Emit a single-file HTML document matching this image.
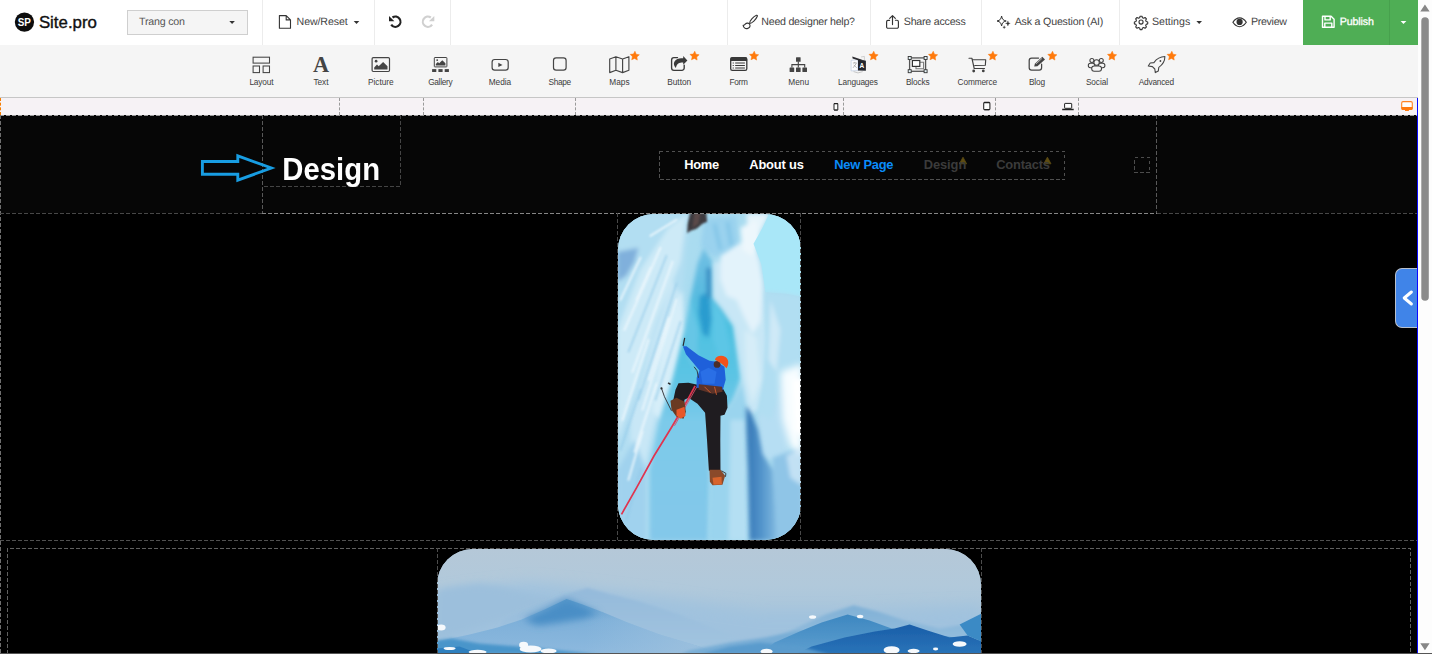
<!DOCTYPE html>
<html>
<head>
<meta charset="utf-8">
<title>Site.pro</title>
<style>
*{box-sizing:border-box;margin:0;padding:0}
html,body{width:1432px;height:654px;overflow:hidden;background:#fff;font-family:"Liberation Sans",sans-serif;}
.abs{position:absolute}
.t{position:absolute;white-space:nowrap}
#top{position:absolute;left:0;top:0;width:1418px;height:45px;background:#fff}
#tools{position:absolute;left:0;top:45px;width:1418px;height:53px;background:#f5f5f5;border-bottom:1px solid #c6c6c6}
#ruler{position:absolute;left:0;top:98px;width:1418px;height:17px;background:#f6f2f5}
#canvas{position:absolute;left:0;top:115px;width:1418px;height:539px;background:#000;overflow:hidden}
#sb{position:absolute;left:1418px;top:0;width:14px;height:654px;background:#fdfdfd}
.sep{position:absolute;top:0;width:1px;height:45px;background:#ececec}
.rd{position:absolute;top:98px;width:0;height:17px;border-left:1px dashed #9a9a9a}
#icons{position:absolute;left:0;top:0}
</style>
</head>
<body>
<!-- TOP BAR -->
<div id="top">
  <div class="abs" style="left:127px;top:10px;width:121px;height:25px;border:1px solid #cfcfcf;background:#f5f5f5"></div>
  <div class="sep" style="left:262px"></div>
  <div class="sep" style="left:374px"></div>
  <div class="sep" style="left:450px"></div>
  <div class="sep" style="left:727px"></div>
  <div class="sep" style="left:870px"></div>
  <div class="sep" style="left:981px"></div>
  <div class="sep" style="left:1119px"></div>
  <div class="abs" style="left:1303px;top:0;width:115px;height:45px;background:#4fae55"></div>
  <div class="abs" style="left:1389px;top:0;width:1px;height:45px;background:#47a14d"></div>
</div>
<!-- TOOLBAR -->
<div id="tools"></div>
<!-- RULER -->
<div id="ruler"></div>
<div class="rd" style="left:0;border-left-color:#f57c00"></div>
<div class="rd" style="left:339px"></div>
<div class="rd" style="left:423px"></div>
<div class="rd" style="left:575px"></div>
<div class="rd" style="left:843px"></div>
<div class="rd" style="left:995px"></div>
<div class="rd" style="left:1078px"></div>

<!-- CANVAS -->
<div id="canvas">
<div class="abs" style="left:0;top:0;width:1418px;height:98px;background:#060606"></div>
<!-- picture 1 -->
<div class="abs" style="left:617.5px;top:99.2px;width:183.2px;height:325.6px;border-radius:36px;overflow:hidden;background:#a9d8ee">
<svg class="abs" style="left:0;top:0" width="183.2" height="325.6" viewBox="617.5 214.2 183.2 325.6" preserveAspectRatio="none">
<defs>
  <filter id="b1" x="-20%" y="-20%" width="140%" height="140%"><feGaussianBlur stdDeviation="0.8"/></filter>
  <filter id="b2" x="-20%" y="-20%" width="140%" height="140%"><feGaussianBlur stdDeviation="2"/></filter>
  <filter id="b3" x="-30%" y="-30%" width="160%" height="160%"><feGaussianBlur stdDeviation="3.5"/></filter>
  <filter id="b4" x="-40%" y="-40%" width="180%" height="180%"><feGaussianBlur stdDeviation="6"/></filter>
  <linearGradient id="gv" x1="0" y1="246" x2="0" y2="540" gradientUnits="userSpaceOnUse">
    <stop offset="0" stop-color="#74c0e4"/><stop offset="0.14" stop-color="#5cbbe0"/><stop offset="0.27" stop-color="#4cc0e0"/><stop offset="0.45" stop-color="#5cc4e4"/><stop offset="0.6" stop-color="#7ccaea"/><stop offset="1" stop-color="#84c8ea"/>
  </linearGradient>
  <linearGradient id="sh" x1="746" y1="0" x2="776" y2="0" gradientUnits="userSpaceOnUse">
    <stop offset="0" stop-color="#3577b6"/><stop offset="0.45" stop-color="#4f91c9"/><stop offset="1" stop-color="#80b9e0"/>
  </linearGradient>
</defs>
<rect x="617" y="214" width="185" height="327" fill="#aadcf0"/>
<!-- left ice wall -->
<g filter="url(#b2)">
  <path d="M617 214 H690 L686 250 L682 300 L676 350 L660 420 L650 460 L649 541 H617 Z" fill="#b2def2"/>
  <path d="M617 330 L640 270 L668 228 L686 214 L680 262 L656 320 L634 390 L617 440 Z" fill="#cdeaf7"/>
  <path d="M630 420 L652 340 L672 280 L682 300 L670 360 L652 430 L642 480 L630 500 Z" fill="#c8e7f6"/>
  <path d="M617 252 L638 248 L634 262 L626 276 L617 282 Z" fill="#80b0dc"/>
  <path d="M617 470 L634 440 L646 470 L646 541 L617 541 Z" fill="#a0d2ee"/>
  <path d="M664 330 L682 290 L684 330 L674 376 L660 420 L652 412 Z" fill="#d6eef9"/>
</g>
<!-- ice texture streaks on left -->
<g fill="none" stroke="#eef8fd" stroke-width="2.2" stroke-linecap="round" filter="url(#b1)" opacity="0.8">
  <path d="M624 330 L660 248"/><path d="M632 372 L672 262"/><path d="M622 420 L648 340"/><path d="M642 410 L676 300"/><path d="M628 480 L642 432"/>
  <path d="M650 236 L676 220"/><path d="M636 300 L650 268"/><path d="M620 300 L640 258"/><path d="M648 380 L668 318"/><path d="M634 452 L656 384"/>
</g>
<g fill="none" stroke="#8fc8e8" stroke-width="1.6" stroke-linecap="round" filter="url(#b1)" opacity="0.7">
  <path d="M628 352 L666 256"/><path d="M638 400 L676 284"/><path d="M620 450 L640 390"/><path d="M655 400 L680 322"/><path d="M626 520 L640 470"/>
</g>
<!-- light blue right of rock -->
<g filter="url(#b2)">
  <path d="M704 218 L736 216 L738 246 L726 258 L712 256 L700 246 Z" fill="#9ad2ee"/>
  <path d="M714 224 L720 250 M727 222 L731 246" stroke="#6cbbe2" stroke-width="2" fill="none"/>
</g>
<!-- central groove -->
<g filter="url(#b2)">
  <path d="M703 248 L712 262 L713 298 L722 310 L733 326 L740 378 L732 402 L722 414 L710 458 L708 541 H649 L649 470 L658 424 L672 380 L684 332 L690 298 L697 264 Z" fill="url(#gv)"/>
  <path d="M699 296 L709 292 L711 320 L708 338 L702 334 L698 314 Z" fill="#2a9ccf"/>
  <path d="M705.5 268 L711 268 L711 298 L706 298 Z" fill="#3a90c4"/>
  <path d="M690 300 L698 330 L696 370 L688 360 L684 332 Z" fill="#66c6e6"/>
  <path d="M712 300 L724 318 L730 350 L722 366 L712 340 Z" fill="#5cc6e6"/>
</g>
<!-- ice right of groove: bright white mass -->
<g filter="url(#b2)">
  <path d="M713 262 L730 262 L748 250 L752 244 L760 262 L764 292 L766 340 L764 380 L758 410 L748 416 L742 380 L734 326 L722 308 L713 298 Z" fill="#c8e7f6"/>
  <path d="M746 214 L769 214 L762 228 L754 244 L748 248 Z" fill="#e6f4fb"/>
  <path d="M720 256 L742 242 L756 250 L762 282 L760 322 L752 334 L744 318 L736 300 L726 296 L720 280 Z" fill="#e3f3fb"/>
  <path d="M740 228 L756 220 L760 240 L752 256 L742 250 Z" fill="#edf7fc"/>
  <path d="M744 330 L756 338 L760 380 L752 404 L746 380 Z" fill="#d6edf8"/>
  <path d="M722 414 L732 402 L742 384 L748 416 L748 470 L750 541 H708 L710 458 Z" fill="#9ad4ee"/>
  <path d="M730 420 L746 420 L748 541 H728 Z" fill="#b4dff3"/>
</g>
<!-- sky -->
<path d="M769 213 H802 V297 L786 294 L765 292.5 L761 265 L753 244 L762 228 Z" fill="#a9e7f8"/>
<!-- right column -->
<g filter="url(#b2)">
  <path d="M765 292 L786 294 L802 297 V376 L784 376 L770 420 L758 412 L764 380 L766 340 Z" fill="#b1def2"/>
  <path d="M770 300 L780 330 L776 372 L768 360 Z" fill="#cfe9f7"/>
  <path d="M758 412 L770 420 L784 376 L790 400 L788 456 L772 460 L758 458 Z" fill="#b6def3"/>
</g>
<!-- shadow column -->
<g filter="url(#b2)">
  <path d="M745.5 406 L751 414 L757.5 430 L762 454 L772 470 L777 541 H749 L747.5 470 L746 430 Z" fill="url(#sh)"/>
  <path d="M772 458 L788 452 L802 446 V541 H776 Z" fill="#8fc5e7"/>
  <path d="M786 456 L802 448 V486 L790 478 Z" fill="#c2e1f4"/>
</g>
<!-- sun glare far right -->
<path d="M780 372 L802 364 V454 L790 448 L782 420 Z" fill="#f7fdff" filter="url(#b3)"/>
<path d="M792 380 L802 378 V440 L794 430 Z" fill="#ffffff" filter="url(#b2)"/>
<!-- dark rock at top -->
<path d="M689.6 213 L705.8 213 L706.6 222 L702 224 L696 229 L690 231 L686.6 233.5 L687.2 224 Z" fill="#3e3a3f" filter="url(#b1)"/>
<path d="M694 213 L700 213 L698 224 L692 228 Z" fill="#5a4a48" filter="url(#b1)"/>
<!-- climber -->
<g>
  <!-- pants -->
  <path d="M697 385 L722 388 L726.4 396 L727 408 L724 415 L720 416 L719.8 440 L720 471 L708.4 471 L706.5 440 L704.6 413 L697 404 L688 398 L684 400 L683 408 L672 404 L675 390 L678 383.4 L688 383 Z" fill="#1f1c20"/>
  <path d="M694.6 386 L686 402 L672 426 L653.6 456 L636 488 L621 514.5" fill="none" stroke="#e0344f" stroke-width="1.7"/>
  <path d="M696.4 387 L682 412 L674 426" fill="none" stroke="#d8506a" stroke-width="0.9"/>
  <!-- left boot -->
  <path d="M670 401 L676 398 L684 402 L685.4 412 L683 419 L676 417 L671 410 Z" fill="#6a3a22"/>
  <path d="M676 410 L684 407 L685 416 L680 419 L676 416 Z" fill="#e8582a"/>
  <!-- right boot -->
  <path d="M709 470 L720 470 L724.6 476 L722 485 L712 485.5 L709.4 482 Z" fill="#8a4a2a"/>
  <path d="M712 478 L721 477 L721.4 484.6 L713 485 Z" fill="#d8642c"/>
  <path d="M721 471 L725.4 473.6 L725 477" fill="none" stroke="#333" stroke-width="0.9"/>
  <!-- jacket -->
  <path d="M682.4 346.4 L686 346.4 L698 355.4 L709 361 L716 362 L724 367 L725.2 380 L722.4 390 L696 388 L696.2 378 L699 370.6 L693 363.4 L685.4 354.4 Z" fill="#1f60da"/>
  <path d="M700 372 L708 368 L716 372 L714 384 L702 384 Z" fill="#2a6fe6"/>
  <!-- harness -->
  <path d="M698.4 384.4 L721.6 387 L722 392 L712 394 L698 389.6 Z" fill="#5e3328"/>
  <path d="M704 387 L710 393 M714 387 L716 395" stroke="#c85a30" stroke-width="1" fill="none"/>
  <!-- head + helmet -->
  <circle cx="716.6" cy="364.6" r="3.4" fill="#4a2e2a"/>
  <path d="M714.4 360 C715.4 356 721 354.6 725 357.2 C728.4 359.6 728.6 364.6 726 368.4 C723.4 365.4 719.6 362.4 714.4 360 Z" fill="#f2521c"/>
  <!-- ice tools -->
  <path d="M682.6 346 L684.2 338" fill="none" stroke="#2a2a30" stroke-width="1.2"/>
  <path d="M693.6 367 L696.6 371 L698 378" fill="none" stroke="#333a44" stroke-width="1"/>
  <path d="M660.8 388 L664 397 L671 411" fill="none" stroke="#3a3a40" stroke-width="1"/>
  <path d="M667.6 383 L670 384.6" fill="none" stroke="#2a2a2a" stroke-width="1.6"/>
  <circle cx="661" cy="388.6" r="1.1" fill="#2a2a2a"/>
</g>
</svg>

</div>
<!-- picture 2 -->
<div class="abs" style="left:437.4px;top:433.5px;width:544px;height:140px;border-radius:36px 36px 0 0;overflow:hidden;background:#a8c4da">
<svg class="abs" style="left:0;top:0" width="544" height="140" viewBox="437.4 548.5 544 140" preserveAspectRatio="none">
<defs>
  <filter id="m1" x="-10%" y="-30%" width="120%" height="160%"><feGaussianBlur stdDeviation="0.7"/></filter>
  <filter id="m2" x="-10%" y="-30%" width="120%" height="160%"><feGaussianBlur stdDeviation="1.6"/></filter>
  <filter id="m3" x="-10%" y="-40%" width="120%" height="180%"><feGaussianBlur stdDeviation="3.5"/></filter>
  <filter id="m4" x="-10%" y="-40%" width="120%" height="180%"><feGaussianBlur stdDeviation="7"/></filter>
  <linearGradient id="sky2" x1="0" y1="548" x2="0" y2="654" gradientUnits="userSpaceOnUse">
    <stop offset="0" stop-color="#b5c8d8"/><stop offset="0.35" stop-color="#b1c9db"/><stop offset="0.7" stop-color="#a5c4dc"/><stop offset="1" stop-color="#9bbfdc"/>
  </linearGradient>
  <linearGradient id="gA" x1="0" y1="584" x2="0" y2="654" gradientUnits="userSpaceOnUse"><stop offset="0" stop-color="#93b9da"/><stop offset="1" stop-color="#a3c5e0"/></linearGradient>
  <linearGradient id="gB" x1="0" y1="598" x2="0" y2="654" gradientUnits="userSpaceOnUse"><stop offset="0" stop-color="#5a9acb"/><stop offset="0.4" stop-color="#7eb0d9"/><stop offset="1" stop-color="#8db9de"/></linearGradient>
  <linearGradient id="gR1" x1="0" y1="604" x2="0" y2="654" gradientUnits="userSpaceOnUse"><stop offset="0" stop-color="#7fb0d6"/><stop offset="1" stop-color="#9cc2df"/></linearGradient>
  <linearGradient id="gR2" x1="0" y1="614" x2="0" y2="654" gradientUnits="userSpaceOnUse"><stop offset="0" stop-color="#3d87c0"/><stop offset="1" stop-color="#5e9fd0"/></linearGradient>
  <linearGradient id="gR3" x1="0" y1="624" x2="0" y2="654" gradientUnits="userSpaceOnUse"><stop offset="0" stop-color="#1a5ea8"/><stop offset="1" stop-color="#2a74b9"/></linearGradient>
</defs>
<rect x="437" y="548" width="545" height="141" fill="url(#sky2)"/>
<!-- far haze bands -->
<g filter="url(#m4)">
  <path d="M437 594 L480 588 L530 582 L570 586 L620 592 L680 600 L760 612 L840 612 L982 606 V690 H437 Z" fill="#a0c2de"/>
</g>
<!-- far left faint ridge -->
<path d="M437 590 L455 586 L480 583 L500 586 L530 594 L560 600 L437 640 Z" fill="#9cbfdc" filter="url(#m3)"/>
<!-- left hazy back peak -->
<path d="M505 618 L540 604 L565 594 L588 587.6 L612 594 L640 601 L680 614 L720 630 L760 646 L780 654 H480 Z" fill="url(#gA)" filter="url(#m2)"/>
<!-- left main ridge -->
<path d="M437 641 L470 634 L498 627 L522 619 L545 609 L567 598.5 L583 604 L604 612 L628 622 L660 634 L700 646 L720 654 H437 Z" fill="url(#gB)" filter="url(#m1)"/>
<path d="M524 619 L548 608 L567 598.5 L580 604 L600 613 L584 618 L560 622 L538 625 Z" fill="#4a8ec6" filter="url(#m3)"/>
<linearGradient id="hz" x1="585" y1="0" x2="700" y2="0" gradientUnits="userSpaceOnUse"><stop offset="0" stop-color="#a0c2de" stop-opacity="0"/><stop offset="1" stop-color="#a0c2de" stop-opacity="0.75"/></linearGradient>
<clipPath id="cB"><path d="M437 641 L470 634 L498 627 L522 619 L545 609 L567 598.5 L583 604 L604 612 L628 622 L660 634 L700 646 L720 654 H437 Z"/></clipPath>
<path d="M585 596 H790 V654 H585 Z" fill="url(#hz)" clip-path="url(#cB)"/>
<!-- bottom-left foreground -->
<path d="M437 640 L452 638 L480 643 L520 646 L560 650 L600 654 H437 Z" fill="#4a95ca" filter="url(#m2)"/>
<path d="M437 648 L460 646 L476 652 L480 654 H437 Z" fill="#2f7fbe" filter="url(#m1)"/>
<!-- right ridges -->
<path d="M770 640 L800 626 L826 614 L854 604.8 L878 611 L905 620 L940 628 L965 624 L982 618 V654 H740 Z" fill="url(#gR1)" filter="url(#m2)"/>
<path d="M690 650 L730 642 L765 637 L800 630 L830 638 L850 654 H680 Z" fill="#78add6" filter="url(#m2)"/>
<path d="M775 642 L800 631 L822 622 L848 614 L870 620 L892 628 L930 634 L982 640 V654 H760 Z" fill="url(#gR2)" filter="url(#m1)"/>
<path d="M812 646 L845 637 L875 631 L895 628 L910 624 L928 630 L950 637 L968 635 L982 641 V654 H795 Z" fill="url(#gR3)" filter="url(#m1)"/>
<path d="M960 624 L982 613 V641 L968 635 Z" fill="#3a8ac5" filter="url(#m1)"/>
<path d="M700 654 L730 646 L760 642 L800 646 L830 654 Z" fill="#5a9bcd" filter="url(#m2)"/>
<!-- clouds -->
<g fill="#f6f9fc" filter="url(#m1)">
  <ellipse cx="441.5" cy="627" rx="4.5" ry="3"/>
  <ellipse cx="531" cy="648.5" rx="11" ry="3.6"/><ellipse cx="524" cy="644.5" rx="4.5" ry="3.2"/><ellipse cx="549" cy="650.5" rx="8" ry="2.6"/>
  <ellipse cx="478" cy="651.5" rx="9" ry="2.2"/><ellipse cx="450" cy="648" rx="6" ry="1.6"/>
  <ellipse cx="767" cy="651" rx="6" ry="2.8"/>
  <ellipse cx="813" cy="616.5" rx="3.6" ry="1.8"/><ellipse cx="860.5" cy="616" rx="3.2" ry="1.8"/>
  <ellipse cx="892" cy="649.5" rx="8" ry="3.8"/><ellipse cx="914" cy="650.5" rx="6" ry="2.2"/>
  <ellipse cx="960" cy="643.5" rx="7" ry="2.8"/><ellipse cx="936" cy="648.5" rx="2.6" ry="1.4"/>
</g>
</svg>

</div>
<svg class="abs" style="left:0;top:0" width="1418" height="539" viewBox="0 115 1418 539">
  <g fill="none" stroke="#6a6a6a" stroke-width="1" stroke-dasharray="3.7 2.3" shape-rendering="crispEdges">
    <!-- canvas top / left -->
    <path d="M0 115.5 H1418" stroke="#9a9a9a"/>
    <path d="M0.5 115 V654" stroke="#6e6e6e"/>
    <!-- section separators -->
    <path d="M0 213.5 H262 M1157 213.5 H1418" stroke="#474747"/>
    <path d="M262 213.5 H1157" stroke="#858585"/>
    <path d="M0 540.5 H1418" stroke="#505050"/>
    <!-- header columns -->
    <path d="M262.5 115 V213" stroke="#585858"/>
    <path d="M1156.5 115 V213" stroke="#585858"/>
    <!-- design title box -->
    <path d="M400.5 115 V186.5 H262.5" stroke="#444"/>
    <!-- nav box -->
    <rect x="659.5" y="151.5" width="405" height="28" stroke="#505050"/>
    <!-- little square -->
    <rect x="1134.5" y="157.5" width="15" height="15" stroke="#4c4c4c"/>
    <!-- picture 1 wrapper -->
    <path d="M617.5 213 V540" stroke="#484848"/>
    <path d="M800.5 213 V540" stroke="#484848"/>
    <!-- section 3 container -->
    <path d="M7.5 654 V548.5 H1410.5 V654" stroke="#606060"/>
    <path d="M437.5 548 V654" stroke="#4c4c4c"/>
    <path d="M981.5 548 V654" stroke="#4c4c4c"/>
  </g>
  <!-- arrow -->
  <path d="M202.4 161.5 H237.8 V155.9 L271.4 168 L237.8 180.2 V174.3 H202.4 Z" fill="none" stroke="#189de2" stroke-width="2.9" stroke-linejoin="miter" stroke-miterlimit="10"/>
  <!-- warning triangles -->
  <path d="M963 157.2 L966.6 163.8 H959.4 Z" fill="#5e4c12" stroke="#5e4c12" stroke-width="0.8" stroke-linejoin="round"/>
  <path d="M1047.4 157.2 L1051 163.8 H1043.8 Z" fill="#5e4c12" stroke="#5e4c12" stroke-width="0.8" stroke-linejoin="round"/>
</svg>
<!-- side handle -->
<div class="abs" style="left:1395px;top:152.5px;width:22px;height:60px;background:#4084e8;border:1px solid #b9c0cc;border-right:none;border-radius:7px 0 0 7px"></div>
<svg class="abs" style="left:1395px;top:152.5px" width="22" height="60" viewBox="1395 267.5 22 60"><path d="M1411.4 291.5 L1404.2 297.5 L1411.4 303.5" fill="none" stroke="#fff" stroke-width="3" stroke-linecap="round" stroke-linejoin="round"/></svg>

</div>

<!-- TEXTS -->
<div class="t" style="left:139.00px;top:11.91px;font-size:10.65px;line-height:21px;letter-spacing:-0.201px;color:#555;text-rendering:geometricPrecision;">Trang con</div>
<div class="t" style="left:296.60px;top:11.91px;font-size:10.65px;line-height:21px;letter-spacing:-0.122px;color:#444;text-rendering:geometricPrecision;">New/Reset</div>
<div class="t" style="left:761.30px;top:11.91px;font-size:10.65px;line-height:21px;letter-spacing:-0.250px;color:#444;text-rendering:geometricPrecision;">Need designer help?</div>
<div class="t" style="left:903.80px;top:11.91px;font-size:10.65px;line-height:21px;letter-spacing:-0.231px;color:#444;text-rendering:geometricPrecision;">Share access</div>
<div class="t" style="left:1014.70px;top:11.91px;font-size:10.65px;line-height:21px;letter-spacing:-0.196px;color:#444;text-rendering:geometricPrecision;">Ask a Question (AI)</div>
<div class="t" style="left:1152.00px;top:11.91px;font-size:10.65px;line-height:21px;letter-spacing:-0.035px;color:#444;text-rendering:geometricPrecision;">Settings</div>
<div class="t" style="left:1251.00px;top:11.91px;font-size:10.65px;line-height:21px;letter-spacing:-0.319px;color:#444;text-rendering:geometricPrecision;">Preview</div>
<div class="t" style="left:1339.70px;top:11.91px;font-size:10.65px;line-height:21px;letter-spacing:-0.122px;color:#fff;text-rendering:geometricPrecision;-webkit-text-stroke:0.3px #fff;">Publish</div>
<div class="t" style="left:249.40px;top:73.82px;font-size:8.30px;line-height:17px;letter-spacing:-0.140px;color:#3c3c3c;">Layout</div>
<div class="t" style="left:313.50px;top:73.82px;font-size:8.30px;line-height:17px;letter-spacing:-0.091px;color:#3c3c3c;">Text</div>
<div class="t" style="left:368.00px;top:73.82px;font-size:8.30px;line-height:17px;letter-spacing:-0.019px;color:#3c3c3c;">Picture</div>
<div class="t" style="left:428.20px;top:73.82px;font-size:8.30px;line-height:17px;letter-spacing:-0.318px;color:#3c3c3c;">Gallery</div>
<div class="t" style="left:488.70px;top:73.82px;font-size:8.30px;line-height:17px;letter-spacing:-0.015px;color:#3c3c3c;">Media</div>
<div class="t" style="left:548.50px;top:73.82px;font-size:8.30px;line-height:17px;letter-spacing:-0.372px;color:#3c3c3c;">Shape</div>
<div class="t" style="left:609.30px;top:73.82px;font-size:8.30px;line-height:17px;letter-spacing:0.022px;color:#3c3c3c;">Maps</div>
<div class="t" style="left:667.30px;top:73.82px;font-size:8.30px;line-height:17px;letter-spacing:-0.037px;color:#3c3c3c;">Button</div>
<div class="t" style="left:729.40px;top:73.82px;font-size:8.30px;line-height:17px;letter-spacing:-0.280px;color:#3c3c3c;">Form</div>
<div class="t" style="left:788.30px;top:73.82px;font-size:8.30px;line-height:17px;letter-spacing:-0.017px;color:#3c3c3c;">Menu</div>
<div class="t" style="left:838.00px;top:73.82px;font-size:8.30px;line-height:17px;letter-spacing:-0.136px;color:#3c3c3c;">Languages</div>
<div class="t" style="left:905.90px;top:73.82px;font-size:8.30px;line-height:17px;letter-spacing:-0.137px;color:#3c3c3c;">Blocks</div>
<div class="t" style="left:957.60px;top:73.82px;font-size:8.30px;line-height:17px;letter-spacing:-0.155px;color:#3c3c3c;">Commerce</div>
<div class="t" style="left:1029.00px;top:73.82px;font-size:8.30px;line-height:17px;letter-spacing:-0.200px;color:#3c3c3c;">Blog</div>
<div class="t" style="left:1085.90px;top:73.82px;font-size:8.30px;line-height:17px;letter-spacing:-0.095px;color:#3c3c3c;">Social</div>
<div class="t" style="left:1138.80px;top:73.82px;font-size:8.30px;line-height:17px;letter-spacing:-0.234px;color:#3c3c3c;">Advanced</div>
<div class="t" style="left:282.30px;top:139.95px;font-size:29.30px;line-height:59px;letter-spacing:0.026px;color:#fff;font-weight:bold;transform:scaleY(1.08);transform-origin:0 39.65px;">Design</div>
<div class="t" style="left:684.25px;top:151.78px;font-size:12.90px;line-height:26px;letter-spacing:-0.287px;color:#fff;font-weight:bold;">Home</div>
<div class="t" style="left:749.25px;top:151.78px;font-size:12.90px;line-height:26px;letter-spacing:-0.158px;color:#fff;font-weight:bold;">About us</div>
<div class="t" style="left:834.25px;top:151.78px;font-size:12.90px;line-height:26px;letter-spacing:-0.234px;color:#0a8cfa;font-weight:bold;">New Page</div>
<div class="t" style="left:923.75px;top:151.78px;font-size:12.90px;line-height:26px;letter-spacing:-0.091px;color:#3b3b3b;font-weight:bold;">Design</div>
<div class="t" style="left:996.25px;top:151.78px;font-size:12.90px;line-height:26px;letter-spacing:-0.209px;color:#3b3b3b;font-weight:bold;">Contacts</div>

<!-- ICONS -->
<svg id="icons" width="1418" height="115" viewBox="0 0 1418 115">
<defs>
  <path id="star" d="M0.00,-4.80 L1.38,-1.90 L4.57,-1.48 L2.23,0.73 L2.82,3.88 L0.00,2.35 L-2.82,3.88 L-2.23,0.73 L-4.57,-1.48 L-1.38,-1.90 Z" fill="#ff7a0c" stroke="#ff7a0c" stroke-width="0.5" stroke-linejoin="round"/>
</defs>
<!-- ===== LOGO ===== -->
<circle cx="24.45" cy="22.1" r="9.65" fill="#0d0d0d"/>
<text x="24.35" y="26.0" font-family="Liberation Sans" font-weight="bold" font-size="10.8" fill="#fff" text-anchor="middle" textLength="13.2" lengthAdjust="spacingAndGlyphs">SP</text>
<text x="38.9" y="27.85" font-family="Liberation Sans" font-size="15.8" fill="#111" stroke="#111" stroke-width="0.36" textLength="58" lengthAdjust="spacingAndGlyphs">Site.pro</text>

<!-- select caret -->
<path d="M229.3 21 h5.6 l-2.8 2.9 z" fill="#333"/>
<!-- file icon -->
<path d="M279.4 15.6 h6.8 l4.3 4.3 v8.4 h-11.1 z M286.2 15.6 v4.3 h4.3" fill="none" stroke="#333" stroke-width="1.1" stroke-linejoin="round"/>
<!-- new/reset caret -->
<path d="M353.7 21 h5.6 l-2.8 2.9 z" fill="#333"/>
<!-- undo -->
<path d="M392.5 17.5 A5.1 5.1 0 1 1 391.2 24.6" fill="none" stroke="#222" stroke-width="2.2"/>
<path d="M389 15.9 v5.3 h5.4 z" fill="#222"/>
<!-- redo -->
<path d="M430.8 17.5 A5.1 5.1 0 1 0 432.1 24.6" fill="none" stroke="#d0d0d0" stroke-width="2.2"/>
<path d="M434.3 15.9 v5.3 h-5.4 z" fill="#d0d0d0"/>
<!-- brush -->
<g fill="none" stroke="#333" stroke-width="1.1" stroke-linecap="round" stroke-linejoin="round">
  <path d="M749.6 23.4 C749.4 21.2 753.4 16.4 756.4 15.3 C757.2 15.1 757.5 15.6 757.3 16.3 C756.2 19.4 751.8 23.6 749.6 23.4 Z"/>
  <path d="M743.1 25.2 C744.2 25.6 744.6 24.9 745.2 24.2 C746.6 22.6 749 22.8 749.8 24.6 C750.6 26.4 749.4 28.2 747.2 28.6 C745.2 28.9 743.4 27.6 743.1 25.2 Z"/>
</g>
<!-- share -->
<g fill="none" stroke="#333" stroke-width="1.15" stroke-linecap="round" stroke-linejoin="round">
  <path d="M889.6 20.3 h-1.6 a1.4 1.4 0 0 0 -1.4 1.4 v5.2 a1.4 1.4 0 0 0 1.4 1.4 h9 a1.4 1.4 0 0 0 1.4 -1.4 v-5.2 a1.4 1.4 0 0 0 -1.4 -1.4 h-1.6"/>
  <path d="M892.5 24.6 V15.8 M889.7 18.4 L892.5 15.6 L895.3 18.4"/>
</g>
<!-- sparkle -->
<g stroke="#333" stroke-linejoin="round">
  <path d="M1001.6 16 C1002.2 19.2 1003 20.3 1006.2 21 C1003 21.7 1002.2 22.8 1001.6 26 C1001 22.8 1000.2 21.7 997 21 C1000.2 20.3 1001 19.2 1001.6 16 Z" fill="none" stroke-width="1"/>
  <path d="M1007.9 20.9 C1008.2 22.7 1008.5 23.1 1010.2 23.4 C1008.5 23.7 1008.2 24.1 1007.9 25.9 C1007.6 24.1 1007.3 23.7 1005.6 23.4 C1007.3 23.1 1007.6 22.7 1007.9 20.9 Z" fill="#333" stroke-width="0.4"/>
  <path d="M1004.2 25.7 C1004.4 26.8 1004.6 27 1005.6 27.2 C1004.6 27.4 1004.4 27.6 1004.2 28.7 C1004 27.6 1003.8 27.4 1002.8 27.2 C1003.8 27 1004 26.8 1004.2 25.7 Z" fill="#333" stroke-width="0.3"/>
</g>
<!-- gear -->
<g fill="none" stroke="#333" stroke-width="1.25" stroke-linejoin="round" transform="translate(1141.05 22.05) scale(0.885) translate(-1141.1 -22)">
  <circle cx="1141.1" cy="22" r="2.3"/>
  <path d="M1140 15.4 h2.2 l0.45 1.75 a5.2 5.2 0 0 1 1.45 0.6 l1.55 -0.9 l1.55 1.55 l-0.9 1.55 a5.2 5.2 0 0 1 0.6 1.45 l1.75 0.45 v2.2 l-1.75 0.45 a5.2 5.2 0 0 1 -0.6 1.45 l0.9 1.55 l-1.55 1.55 l-1.55 -0.9 a5.2 5.2 0 0 1 -1.45 0.6 l-0.45 1.75 h-2.2 l-0.45 -1.75 a5.2 5.2 0 0 1 -1.45 -0.6 l-1.55 0.9 l-1.55 -1.55 l0.9 -1.55 a5.2 5.2 0 0 1 -0.6 -1.45 l-1.75 -0.45 v-2.2 l1.75 -0.45 a5.2 5.2 0 0 1 0.6 -1.45 l-0.9 -1.55 l1.55 -1.55 l1.55 0.9 a5.2 5.2 0 0 1 1.45 -0.6 z"/>
</g>
<!-- settings caret -->
<path d="M1196.4 21 h5.6 l-2.8 2.9 z" fill="#333"/>
<!-- eye -->
<path d="M1232.9 22.3 C1235.2 18.9 1237.4 17.9 1239.6 17.9 C1241.8 17.9 1244 18.9 1246.3 22.3 C1244 25.7 1241.8 26.7 1239.6 26.7 C1237.4 26.7 1235.2 25.7 1232.9 22.3 Z" fill="none" stroke="#333" stroke-width="1.15"/>
<circle cx="1239.6" cy="21.9" r="3.1" fill="#333"/>
<!-- save -->
<g fill="none" stroke="#fff" stroke-width="1.4" stroke-linejoin="round">
  <path d="M1322.5 16.3 h8.6 l3 3 v8 h-11.6 z"/>
  <path d="M1325 16.3 v3.6 h5.2 v-3.6"/>
  <path d="M1324.8 27.3 v-4.2 h7 v4.2"/>
</g>
<!-- publish caret -->
<path d="M1400.6 21 h5.8 l-2.9 2.9 z" fill="#fff"/>

<!-- ===== TOOLBAR ICONS ===== -->
<g fill="none" stroke="#444" stroke-width="1.05">
  <!-- layout -->
  <rect x="253.1" y="57.2" width="16.4" height="5.9"/>
  <rect x="253.1" y="66" width="6.4" height="6.6"/>
  <rect x="263.1" y="66" width="6.4" height="6.6"/>
</g>
<!-- text A -->
<text x="321.1" y="72.3" font-family="Liberation Serif" font-weight="bold" font-size="22.3" fill="#444" text-anchor="middle">A</text>
<!-- picture -->
<rect x="372.1" y="57.6" width="17.4" height="13.9" rx="1.2" fill="none" stroke="#444" stroke-width="1.2"/>
<circle cx="376.1" cy="61.2" r="1.35" fill="#444"/>
<path d="M374.2 69.6 v-2.2 l2.8 -2.8 l1.7 1.7 l4.4 -4.4 l4.4 4.4 v3.3 z" fill="#444"/>
<!-- gallery -->
<rect x="434.3" y="57.5" width="12.6" height="9.4" rx="0.6" fill="none" stroke="#444" stroke-width="1"/>
<circle cx="437.2" cy="60.1" r="0.95" fill="#444"/>
<path d="M435.8 65.5 v-1.4 l2.1 -2.1 l1.3 1.3 l3.1 -3.1 l3.1 3.1 v2.2 z" fill="#444"/>
<rect x="432.1" y="69.1" width="4.2" height="2.9" fill="#444"/><rect x="438.4" y="69.1" width="4.2" height="2.9" fill="#444"/><rect x="444.7" y="69.1" width="4.2" height="2.9" fill="#444"/>
<!-- media -->
<rect x="492.1" y="59.5" width="16.1" height="10.7" rx="2.6" fill="none" stroke="#444" stroke-width="1.2"/>
<path d="M498.3 62.7 v4.4 l4.2 -2.2 z" fill="#444"/>
<!-- shape -->
<rect x="553.5" y="57.9" width="12.6" height="12.3" rx="2.6" fill="none" stroke="#444" stroke-width="1.2"/>
<!-- maps -->
<path d="M609.7 59 L615.9 56.7 L622.6 59 L628.9 56.7 V70.3 L622.6 72.6 L615.9 70.3 L609.7 72.6 Z M615.9 56.7 V70.3 M622.6 59 V72.6" fill="none" stroke="#444" stroke-width="1.15" stroke-linejoin="round"/>
<!-- button (share-square) -->
<path d="M677.5 57.6 h-3.6 a2.3 2.3 0 0 0 -2.3 2.3 v8.1 a2.3 2.3 0 0 0 2.3 2.3 h8 a2.3 2.3 0 0 0 2.3 -2.3 v-2.9" fill="none" stroke="#3a3a3a" stroke-width="1.35" stroke-linecap="round"/>
<path d="M683.2 56 L687.4 60.4 L683.2 64.7 V62.5 C679.5 62.4 676.7 63.5 675.9 67.9 C673.6 65.6 673 62.2 675.8 59.9 C677.8 58.5 680.4 58.3 683.2 58.3 Z" fill="#3a3a3a"/>
<!-- form -->
<rect x="730.7" y="57.6" width="16.1" height="12.8" rx="1.6" fill="none" stroke="#383838" stroke-width="1.3"/>
<path d="M730.4 61 v-2.2 a1.6 1.6 0 0 1 1.6 -1.6 h13.5 a1.6 1.6 0 0 1 1.6 1.6 v2.2 z" fill="#383838"/>
<path d="M732.7 63 h1.1 M735.2 63 h9.7 M732.7 65.5 h1.1 M735.2 65.5 h9.7 M732.7 68 h1.1 M735.2 68 h9.7" stroke="#383838" stroke-width="1" fill="none"/>
<!-- menu (sitemap) -->
<g fill="#444">
  <rect x="796" y="57.3" width="4.6" height="4.4" rx="0.5"/>
  <rect x="789.6" y="67.4" width="4.6" height="4.6" rx="0.5"/>
  <rect x="796" y="67.4" width="4.6" height="4.6" rx="0.5"/>
  <rect x="802.4" y="67.4" width="4.6" height="4.6" rx="0.5"/>
</g>
<path d="M798.3 61.5 V67.5 M791.9 67.5 V64.6 H804.7 V67.5" fill="none" stroke="#444" stroke-width="1.1"/>
<!-- languages -->
<path d="M851.1 60.3 L858 59.7 V70.6 L851.1 70.9 Z" fill="#fcfdff" stroke="#b4c2da" stroke-width="0.6"/>
<path d="M852.9 63 h3.8 M854.8 61.9 v1.1 M853.1 67.8 L856.4 63.3 M853.7 64.8 L856.7 67.8" fill="none" stroke="#9a9a9a" stroke-width="0.7"/>
<path d="M858 59.5 L865.9 60.8 V70.7 L858 70.6 Z" fill="#23262e"/>
<path d="M852.3 56.6 L865.7 60.9 L858 60.3 L852.6 58.5 Z" fill="#2b2b2f"/>
<path d="M861 57 L864.4 56.4 V60" fill="none" stroke="#b0b0b0" stroke-width="0.55"/>
<path d="M853.6 71.6 Q857.9 74.3 862.7 71.6" fill="none" stroke="#a8a8a8" stroke-width="0.6"/>
<text x="861.85" y="68" font-family="Liberation Sans" font-weight="bold" font-size="7.8" fill="#fff" text-anchor="middle" textLength="4.7" lengthAdjust="spacingAndGlyphs">A</text>
<!-- blocks -->
<rect x="909.6" y="57.9" width="16" height="13.4" fill="none" stroke="#555" stroke-width="1.3"/>
<path d="M916 66.4 v2.4 h7.6 v-6.6 h-3.6" fill="none" stroke="#7a7a7a" stroke-width="1.1"/>
<rect x="912.4" y="60.5" width="7.4" height="5.9" fill="#fff" stroke="#333" stroke-width="1.2"/>
<g fill="#e8f6fa" stroke="#333" stroke-width="0.9">
  <rect x="908.2" y="56.5" width="3" height="3"/><rect x="924.1" y="56.5" width="3" height="3"/>
  <rect x="908.2" y="69.7" width="3" height="3"/><rect x="924.1" y="69.7" width="3" height="3"/>
</g>
<!-- commerce (cart) -->
<g fill="none" stroke="#404040" stroke-width="1.15" stroke-linecap="round" stroke-linejoin="round">
  <path d="M969 58.2 h2.9 l2.3 10.3 h10.3"/>
  <path d="M972.4 59.7 h13.3 l-0.35 5.5 l-10.6 0.35"/>
</g>
<circle cx="973.7" cy="71" r="1.4" fill="#404040"/><circle cx="983.3" cy="70.9" r="1.4" fill="#404040"/>
<!-- blog (edit) -->
<path d="M1038.6 58 h-7 a2.4 2.4 0 0 0 -2.4 2.4 v7.4 a2.4 2.4 0 0 0 2.4 2.4 h7.6 a2.4 2.4 0 0 0 2.4 -2.4 v-3.6" fill="none" stroke="#444" stroke-width="1.25" stroke-linecap="round"/>
<path d="M1034.2 66.6 L1034.9 63.7 L1042.3 56.7 L1045 59.5 L1037.4 66.3 Z" fill="#444"/>
<path d="M1036 63.9 L1042.1 58.3" stroke="#f5f5f5" stroke-width="0.6"/>
<!-- social (users) -->
<g fill="#f5f5f5" stroke="#404040" stroke-width="1.05">
  <circle cx="1091.9" cy="60.4" r="2"/>
  <circle cx="1101.3" cy="60.4" r="2"/>
  <rect x="1088.3" y="63.3" width="6.6" height="4.4" rx="2.1"/>
  <rect x="1098.3" y="63.3" width="6.6" height="4.4" rx="2.1"/>
  <circle cx="1096.6" cy="62.5" r="2.7"/>
  <rect x="1091.7" y="66" width="9.8" height="5.2" rx="2.5"/>
</g>
<!-- advanced (rocket) -->
<g fill="none" stroke="#444" stroke-width="1.1" stroke-linejoin="round" stroke-linecap="round">
  <path d="M1164.9 56.5 C1160.4 56.6 1156.6 58.8 1153.9 62.6 L1150.2 63 L1148.3 66 L1152.4 66.6 L1154.8 69 L1155.3 72.6 L1158.3 70.9 L1158.8 67.4 C1162.6 64.7 1164.9 61 1164.9 56.5 Z"/>
</g>
<circle cx="1160.4" cy="61" r="0.9" fill="#444"/>

<!-- stars -->
<g>
  <use href="#star" transform="translate(634.7 56.05) rotate(3)"/>
  <use href="#star" transform="translate(694.5 56.05) rotate(3)"/>
  <use href="#star" transform="translate(754 56.05) rotate(3)"/>
  <use href="#star" transform="translate(873.5 56.05) rotate(3)"/>
  <use href="#star" transform="translate(933 56.05) rotate(3)"/>
  <use href="#star" transform="translate(992.7 56.05) rotate(3)"/>
  <use href="#star" transform="translate(1052.3 56.05) rotate(3)"/>
  <use href="#star" transform="translate(1112 56.05) rotate(3)"/>
  <use href="#star" transform="translate(1171.6 56.05) rotate(3)"/>
</g>

<!-- ruler device icons -->
<rect x="834" y="103.5" width="3.8" height="6.6" rx="0.3" fill="#fff" stroke="#222" stroke-width="1"/>
<path d="M834 103.6 h3.8 M834 110 h3.8" stroke="#222" stroke-width="1.2"/>
<rect x="983.7" y="102.5" width="6.2" height="7.2" rx="0.9" fill="#fff" stroke="#222" stroke-width="1.05"/>
<path d="M984.2 102.5 h5.2 M984.2 109.7 h5.2" stroke="#222" stroke-width="1.3"/>
<rect x="1064.6" y="103.4" width="7.1" height="4.9" rx="0.5" fill="#fff" stroke="#222" stroke-width="1"/>
<path d="M1062.2 109.5 h11.5" stroke="#222" stroke-width="1.5"/>
<!-- desktop (orange) -->
<rect x="1401.7" y="101.6" width="10.6" height="7.8" rx="1.3" fill="#fff" stroke="#ff8324" stroke-width="1.1"/>
<path d="M1401.4 107 h11.2 v1.6 a1.3 1.3 0 0 1 -1.3 1.3 h-8.6 a1.3 1.3 0 0 1 -1.3 -1.3 z" fill="#ff7a10"/>
<rect x="1405" y="109.6" width="3.9" height="1.4" fill="#ff7a10"/>
</svg>


<!-- SCROLLBAR -->
<div id="sb">
  <svg class="abs" style="left:0;top:0" width="14" height="654" viewBox="1418 0 14 654"><path d="M1420.3 11.4 L1424.95 4.5 L1429.6 11.4 Z M1420.3 643.2 L1429.6 643.2 L1424.95 650.2 Z" fill="#878787"/><rect x="1421.3" y="17.3" width="7.5" height="283.4" rx="3.75" fill="#8b8b8b"/></svg>
</div>
<div class="abs" style="left:1417px;top:98px;width:1px;height:556px;background:#0a0aff"></div>
<div class="abs" style="left:0;top:653px;width:1432px;height:1px;background:#555"></div>
</body>
</html>
